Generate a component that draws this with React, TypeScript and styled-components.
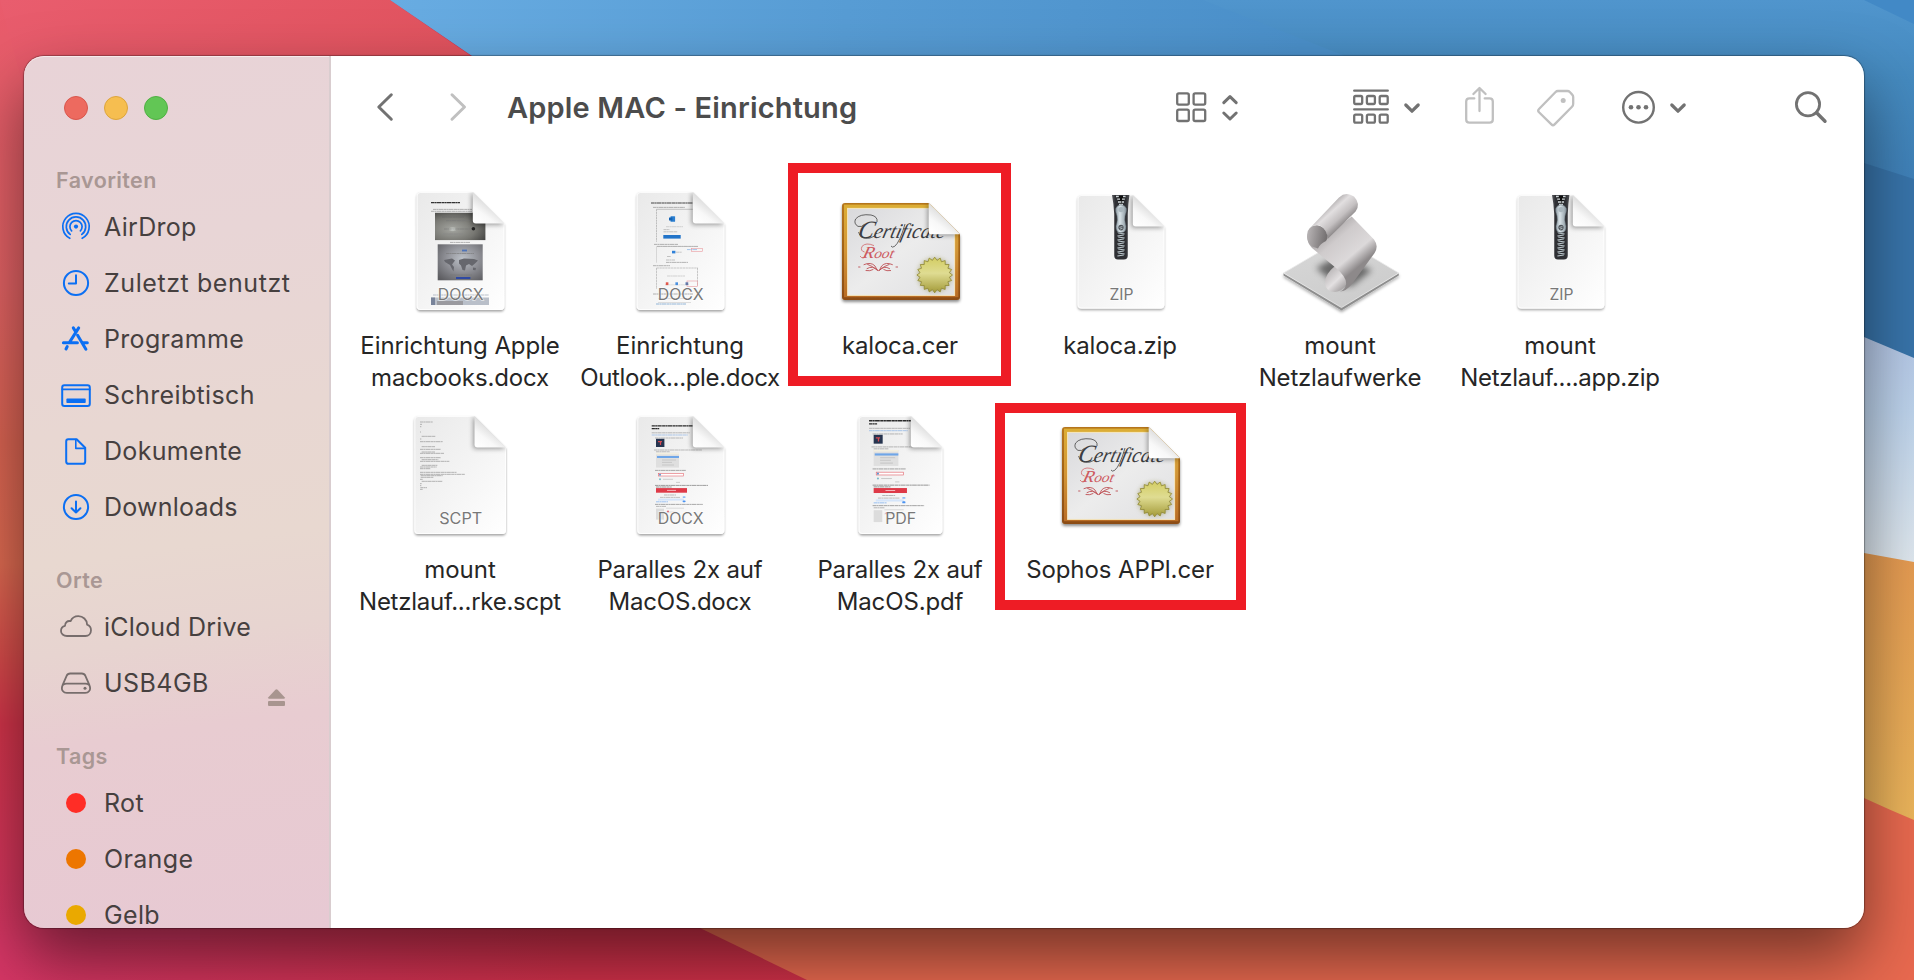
import React from 'react';
import styled, { createGlobalStyle } from 'styled-components';

const GlobalStyle = createGlobalStyle`
  * { box-sizing: border-box; }
  html, body { margin: 0; padding: 0; }
  body {
    width: 1914px;
    height: 980px;
    overflow: hidden;
    font-family: Inter, 'Liberation Sans', sans-serif;
    -webkit-font-smoothing: antialiased;
  }
`;

const Desktop = styled.div`
  position: relative;
  width: 1914px;
  height: 980px;
  padding: 56px 50px 52px 24px;
  overflow: hidden;
  background: #c22c3e;
`;

const WallpaperSvg = styled.svg`
  position: absolute;
  inset: 0;
  display: block;
`;

const WindowFrame = styled.div`
  position: relative;
  display: flex;
  width: 1840px;
  height: 872px;
  border-radius: 20px;
  box-shadow: 0 0 1px 1px rgba(0, 0, 0, 0.3), 0 30px 64px rgba(0, 0, 0, 0.5);
`;

const Sidebar = styled.aside`
  width: 307px;
  height: 100%;
  overflow: hidden;
  border-radius: 20px 0 0 20px;
  border-right: 2px solid #d9cdcf;
  box-shadow: inset 0 1px 0 rgba(255, 255, 255, 0.55);
  background: linear-gradient(
    172deg,
    #e8c8d4 0%,
    #e8ccd1 20%,
    #e7d4d0 33%,
    #e8d8d0 44%,
    #e8d7d2 58%,
    #e8d5d6 78%,
    #e8d3d7 100%
  );
  background: linear-gradient(
    172deg,
    #e8d3d7 0%,
    #e8d5d6 22%,
    #e8d7d2 42%,
    #e8d8d0 56%,
    #e7d4d0 66%,
    #e8ccd1 76%,
    #e7c9d3 100%
  );
`;

const TrafficLights = styled.div`
  display: flex;
  gap: 16px;
  height: 105px;
  padding: 40px 0 0 40px;
`;

const Light = styled.span<{ $fill: string; $edge: string }>`
  width: 24px;
  height: 24px;
  border-radius: 50%;
  background: ${(p) => p.$fill};
  border: 1px solid ${(p) => p.$edge};
`;

const Section = styled.section`
  margin-bottom: 26px;
`;

const SectionTitle = styled.h2`
  display: flex;
  align-items: center;
  height: 38px;
  margin: 0;
  padding-left: 32px;
  font-size: 21.5px;
  font-weight: 600;
  letter-spacing: 0.4px;
  color: #a99794;
`;

const SidebarRow = styled.div`
  display: flex;
  align-items: center;
  gap: 12px;
  height: 56px;
  padding: 0 44px 0 36px;
  font-size: 25px;
  color: #46403f;
  white-space: nowrap;
`;

const RowLabel = styled.span<{ $spacing?: number }>`
  letter-spacing: ${(p) => p.$spacing ?? 0}px;
`;

const IconSvg = styled.svg`
  display: block;
  flex: none;
  overflow: visible;
`;

const TagDot = styled.span<{ $color: string }>`
  width: 20px;
  height: 20px;
  margin: 0 6px;
  border-radius: 50%;
  background: ${(p) => p.$color};
`;

const EjectButton = styled.span`
  align-self: flex-end;
  margin: 0 0 5px auto;
`;

const Content = styled.main`
  flex: 1;
  display: flex;
  flex-direction: column;
  border-radius: 0 20px 20px 0;
  background: #fff;
`;

const Toolbar = styled.header`
  display: flex;
  align-items: center;
  height: 104px;
  padding-left: 44px;
`;

const ToolButton = styled.span<{ $gap: number }>`
  display: block;
  margin-right: ${(p) => p.$gap}px;
`;

const Title = styled.h1`
  width: 669px;
  margin: 0 0 0 39px;
  font-size: 29px;
  font-weight: 600;
  line-height: 40px;
  letter-spacing: 0.17px;
  color: #4c4c4c;
  white-space: nowrap;
`;

const FileGrid = styled.div`
  display: grid;
  grid-template-columns: repeat(6, 220px);
  grid-auto-rows: 224px;
  padding: 26px 0 0 19px;
`;

const FileCell = styled.div`
  position: relative;
  display: flex;
  flex-direction: column;
  align-items: center;
`;

const FileName = styled.div`
  margin-top: 16px;
  font-size: 24px;
  line-height: 32px;
  text-align: center;
  color: #262626;
  white-space: nowrap;
`;

const NameLine = styled.div<{ $spacing: number }>`
  letter-spacing: ${(p) => p.$spacing}px;
`;

const Highlight = styled.div<{ $x: number; $y: number; $w: number; $h: number }>`
  position: absolute;
  left: ${(p) => p.$x}px;
  top: ${(p) => p.$y}px;
  width: ${(p) => p.$w}px;
  height: ${(p) => p.$h}px;
  border: 10px solid #ee1c25;
`;

function Wallpaper() {
  return (
    <WallpaperSvg width="1914" height="980" viewBox="0 0 1914 980">
      <defs>
        <linearGradient id="wpLeft" x1="0" y1="0" x2="0" y2="1">
          <stop offset="0" stopColor="#e95b6c" />
          <stop offset="0.3" stopColor="#e26264" />
          <stop offset="0.47" stopColor="#da6452" />
          <stop offset="0.6" stopColor="#de6a51" />
          <stop offset="0.7" stopColor="#d64b4a" />
          <stop offset="0.77" stopColor="#d2344a" />
          <stop offset="1" stopColor="#d53663" />
        </linearGradient>
        <linearGradient id="wpBottom" x1="0" y1="0" x2="1" y2="0">
          <stop offset="0" stopColor="#d53665" />
          <stop offset="0.3" stopColor="#cf3049" />
          <stop offset="1" stopColor="#cc3040" />
        </linearGradient>
        <linearGradient id="wpRed" x1="0" y1="0" x2="1" y2="0.3">
          <stop offset="0" stopColor="#e95d6e" />
          <stop offset="1" stopColor="#e0525d" />
        </linearGradient>
        <linearGradient id="wpSky" gradientUnits="userSpaceOnUse" x1="390" y1="0" x2="1300" y2="60">
          <stop offset="0" stopColor="#68ace2" />
          <stop offset="0.5" stopColor="#579cd4" />
          <stop offset="1" stopColor="#4b90ca" />
        </linearGradient>
        <linearGradient id="wpBlue" x1="0" y1="0" x2="0" y2="1">
          <stop offset="0" stopColor="#5095cd" />
          <stop offset="0.4" stopColor="#458abf" />
          <stop offset="1" stopColor="#3f80b8" />
        </linearGradient>
        <linearGradient id="wpLav" x1="0" y1="0" x2="0" y2="1">
          <stop offset="0" stopColor="#aebde2" />
          <stop offset="0.45" stopColor="#bdd3ec" />
          <stop offset="1" stopColor="#e4ebf0" />
        </linearGradient>
        <linearGradient id="wpGold" x1="0" y1="0" x2="0" y2="1">
          <stop offset="0" stopColor="#e59a52" />
          <stop offset="1" stopColor="#ecb75c" />
        </linearGradient>
      </defs>
      <rect width="1914" height="980" fill="url(#wpBottom)" />
      <rect width="200" height="940" fill="url(#wpLeft)" />
      <path d="M0 0H390L520 90H24Z" fill="url(#wpRed)" />
      <path d="M390 0H1914V200H600Q520 90 472 56Z" fill="url(#wpSky)" />
      <path d="M1203 0H1914V200H1600L1345 56Z" fill="url(#wpBlue)" />
      <path d="M1864 0H1914V24Z" fill="#4289c6" />
      <path d="M1700 130L1864 163L1914 179V380H1700Z" fill="#3874aa" />
      <path d="M1700 270L1864 337L1914 358V580H1700Z" fill="url(#wpLav)" />
      <path d="M1700 545L1864 553L1914 562V840H1700Z" fill="url(#wpGold)" />
      <path d="M640 900H1700V740L1864 798Q1890 810 1914 820V980H807L700 928Z" fill="#e8694f" />
    </WallpaperSvg>
  );
}

const BLUE = '#0b6ff3';
const DIM = '#776d6c';

function SidebarIcon({ name }: { name: string }) {
  const stroke = {
    fill: 'none',
    stroke: BLUE,
    strokeWidth: 2,
    strokeLinecap: 'round' as const,
    strokeLinejoin: 'round' as const,
  };
  return (
    <IconSvg width="32" height="32" viewBox="0 0 32 32">
      {name === 'airdrop' && (
        <g {...stroke} strokeWidth={1.7} transform="translate(0,-.4)">
          <path d="M9.8 27.7A13.2 13.2 0 1 1 22.2 27.7" />
          <path d="M10.2 23.8A9.7 9.7 0 1 1 21.8 23.8" />
          <path d="M11.6 20.3A6.1 6.1 0 1 1 20.4 20.3" />
          <circle cx="16" cy="16" r="2.1" fill={BLUE} stroke="none" />
        </g>
      )}
      {name === 'recent' && (
        <g {...stroke}>
          <circle cx="16" cy="16" r="12.1" />
          <path d="M16 8.2V16.4H8.8" />
        </g>
      )}
      {name === 'apps' && (
        <g {...stroke} strokeWidth={3}>
          <path d="M18.7 4.9L9.3 19.6M3.4 19.8H17.4M7.2 23.6L6 26M13.3 4.9L16 9.3M17.6 12.2L25.9 26.2M23 19.8H27.3" />
        </g>
      )}
      {name === 'desktop' && (
        <g {...stroke}>
          <rect x="2.2" y="6.2" width="27.6" height="20.8" rx="2.2" />
          <path d="M2.2 10.4H29.8" strokeWidth={1.6} />
          <rect x="6.4" y="19.6" width="19.3" height="4.4" rx="0.8" fill={BLUE} stroke="none" />
        </g>
      )}
      {name === 'doc' && (
        <g {...stroke}>
          <path d="M8.2 4.2H16.6L25.2 12.8V26.4Q25.2 28.8 22.8 28.8H8.6Q6.2 28.8 6.2 26.4V6.4Q6.2 4.2 8.2 4.2Z" />
          <path d="M15.8 4.6V13.4H25" strokeWidth={1.6} />
        </g>
      )}
      {name === 'download' && (
        <g {...stroke}>
          <circle cx="16" cy="16" r="12.1" />
          <path d="M16 10.5V21.4M11.6 17.2L16 21.5L20.4 17.2" />
        </g>
      )}
      {name === 'cloud' && (
        <g {...stroke} stroke={DIM} strokeWidth={1.8}>
          <path d="M7 25C3.4 25 1 22.8 1 19.9C1 17.3 2.7 15.4 5 14.9C4.8 11.6 7.6 9.3 10.6 10.2C12 7 15 5.2 18.3 5.2C23 5.2 26.9 8.6 27.1 13.6C29.6 14.5 31 16.6 31 19.2C31 22.5 28.6 25 25.4 25Z" />
        </g>
      )}
      {name === 'drive' && (
        <g {...stroke} stroke={DIM} strokeWidth={1.8}>
          <path d="M10.2 6.5H21.8Q24.4 6.5 25.4 8.8L29.3 17.8Q31 22 29.2 24Q27.8 25.9 25.2 25.9H6.8Q4.2 25.9 2.8 24Q1 22 2.7 17.8L6.6 8.8Q7.6 6.5 10.2 6.5Z" />
          <path d="M3.4 17.6Q4.6 16.6 6.6 16.6H25.4Q27.4 16.6 28.6 17.6" />
          <circle cx="25" cy="21.3" r="1.5" fill={DIM} stroke="none" />
        </g>
      )}
    </IconSvg>
  );
}

const GREY = '#727272';
const PALE = '#c0c0c0';

function ToolIcon({ name, width }: { name: string; width: number }) {
  const s = {
    fill: 'none',
    stroke: GREY,
    strokeWidth: 2.6,
    strokeLinecap: 'round' as const,
    strokeLinejoin: 'round' as const,
  };
  return (
    <IconSvg width={width} height="44" viewBox={`0 0 ${width} 44`}>
      {name === 'back' && <path {...s} d="M16.3 8.8L3.8 21L16.3 33.2" strokeWidth={3} />}
      {name === 'forward' && <path {...s} stroke={PALE} d="M2 8.8L14.5 21L2 33.2" strokeWidth={3} />}
      {name === 'grid' && (
        <g {...s} strokeWidth={2.3}>
          {[1.2, 17.6].map((x) =>
            [7.3, 23.6].map((y) => <rect key={`${x}-${y}`} x={x} y={y} width="11.6" height="11.4" rx="1.6" />),
          )}
        </g>
      )}
      {name === 'updown' && <path {...s} strokeWidth={3} d="M1.8 16.6L8 10.6L14.2 16.6M1.8 27L8 33L14.2 27" />}
      {name === 'group' && (
        <g {...s} strokeWidth={2.3}>
          <path d="M1.2 4.7H34.8M1.2 23.4H34.8" />
          {[1.2, 13.9, 26.7].map((x) =>
            [10, 28.6].map((y) => <rect key={`${x}-${y}`} x={x} y={y} width="8" height="8" rx="1.4" />),
          )}
        </g>
      )}
      {name === 'chevron' && <path {...s} strokeWidth={3.2} d="M1.8 19L8 25.2L14.2 19" />}
      {name === 'share' && (
        <g {...s} stroke={PALE} strokeWidth={2.3}>
          <path d="M9.3 12.4H4.4Q1.2 12.4 1.2 15.6V33.4Q1.2 36.6 4.4 36.6H24.6Q27.8 36.6 27.8 33.4V15.6Q27.8 12.4 24.6 12.4H19.7" />
          <path d="M14.5 25V2.2M8.4 8L14.5 2L20.6 8" />
        </g>
      )}
      {name === 'tag' && (
        <g {...s} stroke={PALE} strokeWidth={2.3}>
          <path d="M20.8 5H30.4Q31.8 5 32.8 6L35.2 8.6Q36.2 9.6 36.2 11V17.8Q36.2 19.6 35 20.8L17.6 38.4Q16 40 14.4 38.4L2 26.2Q.4 24.6 2 23L18.6 6Q19.6 5 20.8 5Z" />
          <circle cx="26.2" cy="14.6" r="2.5" fill={PALE} stroke="none" />
        </g>
      )}
      {name === 'more' && (
        <g {...s} strokeWidth={2.4}>
          <circle cx="16.5" cy="21.3" r="15.3" />
          {[9, 16.5, 24].map((x) => (
            <circle key={x} cx={x} cy="21.3" r="2.3" fill={GREY} stroke="none" />
          ))}
        </g>
      )}
      {name === 'search' && (
        <g {...s} strokeWidth={2.8}>
          <circle cx="13" cy="18.2" r="11.6" />
          <path d="M21.6 26.8L30 35.2" strokeWidth={3.4} />
        </g>
      )}
    </IconSvg>
  );
}

type Line = [x: number, y: number, w: number, color?: string];

function MicroLines({ lines, h = 0.8 }: { lines: Line[]; h?: number }) {
  return (
    <g>
      {lines.map(([x, y, w, color], i) => (
        <path
          key={i}
          d={`M${x} ${y}H${x + w}`}
          stroke={color ?? '#a0a0a0'}
          strokeWidth={h}
          strokeDasharray="3.2 .3 1.8 .3 4.4 .4"
        />
      ))}
    </g>
  );
}

/** White sheet with a turned top-right corner, shared by all document icons. */
function Sheet({
  id,
  left,
  right,
  top = 6,
  bottom = 124,
  children,
  ext,
  extWidth,
  extX = 64.7,
}: {
  id: string;
  left: number;
  right: number;
  top?: number;
  bottom?: number;
  children?: React.ReactNode;
  ext: string;
  extWidth: number;
  extX?: number;
}) {
  const f = 31.5;
  const outline = `M${left + 4} ${top}H${right - f}L${right} ${top + f}V${bottom - 4}Q${right} ${bottom} ${right - 4} ${bottom}H${left + 4}Q${left} ${bottom} ${left} ${bottom - 4}V${top + 4}Q${left} ${top} ${left + 4} ${top}Z`;
  return (
    <IconSvg width="128" height="128" viewBox="0 0 128 128">
      <defs>
        <linearGradient id={`${id}p`} x1="0" y1="0" x2="1" y2="1">
          <stop offset="0" stopColor="#e9e9e9" />
          <stop offset="0.55" stopColor="#f5f5f5" />
          <stop offset="1" stopColor="#ffffff" />
        </linearGradient>
        <linearGradient id={`${id}f`} x1="0.1" y1="1" x2="0.55" y2="0.4">
          <stop offset="0" stopColor="#ffffff" />
          <stop offset="0.5" stopColor="#f8f8f8" />
          <stop offset="1" stopColor="#dcdcdc" />
        </linearGradient>
        <filter id={`${id}s`} x="-20%" y="-20%" width="140%" height="140%">
          <feDropShadow dx="0" dy="1.6" stdDeviation="0.9" floodOpacity="0.36" />
        </filter>
        <filter id={`${id}b`} x="-40%" y="-40%" width="180%" height="180%">
          <feGaussianBlur stdDeviation="2.6" />
        </filter>
        <clipPath id={`${id}c`}>
          <path d={outline} />
        </clipPath>
      </defs>
      <path d={outline} fill={`url(#${id}p)`} filter={`url(#${id}s)`} />
      <g clipPath={`url(#${id}c)`}>
        <path d={outline} fill="none" stroke="#fff" strokeWidth="2" opacity="0.8" />
        {children}
        <path
          d={`M${right - f - 1} ${top}V${top + f + 1}H${right}Z`}
          fill="#000"
          opacity="0.42"
          filter={`url(#${id}b)`}
        />
      </g>
      <path
        d={`M${right - f} ${top}V${top + f - 3}Q${right - f} ${top + f} ${right - f + 3} ${top + f}H${right}Z`}
        fill={`url(#${id}f)`}
      />
      <text
        x={extX}
        y="113.7"
        textAnchor="middle"
        textLength={extWidth}
        lengthAdjust="spacingAndGlyphs"
        fontFamily="Inter, sans-serif"
        fontSize="15.8"
        fill="#787878"
        stroke="#fff"
        strokeWidth="1.4"
        strokeOpacity="0.65"
        paintOrder="stroke"
      >
        {ext}
      </text>
    </IconSvg>
  );
}

function DocxPhotos() {
  return (
    <Sheet id="d1" left={20.7} right={108.3} ext="DOCX" extWidth={46}>
      <defs>
        <radialGradient id="ph1" cx="0.35" cy="0.6" r="0.75">
          <stop offset="0" stopColor="#e0e6e0" />
          <stop offset="0.12" stopColor="#9c9d98" />
          <stop offset="0.6" stopColor="#777772" />
          <stop offset="1" stopColor="#444442" />
        </radialGradient>
        <radialGradient id="ph2" cx="0.55" cy="0.4" r="0.75">
          <stop offset="0" stopColor="#bcc1c8" />
          <stop offset="0.5" stopColor="#8e8f95" />
          <stop offset="1" stopColor="#5c5c60" />
        </radialGradient>
      </defs>
      <MicroLines lines={[[35, 16.7, 29, '#333']]} h={1.2} />
      <MicroLines lines={[[37, 23.4, 39], [35, 25.3, 41], [54, 56.4, 20]]} />
      <rect x="39" y="26.8" width="50.4" height="27.3" fill="url(#ph1)" />
      <MicroLines
        lines={[[46, 31, 22, '#666'], [50, 34.6, 24, '#777'], [48, 43, 26, '#777'], [47, 48, 20, '#888']]}
        h={0.6}
      />
      <circle cx="77.4" cy="42.8" r="1.8" fill="#222" />
      <rect x="41.7" y="58.3" width="45" height="36" fill="url(#ph2)" />
      <rect x="66" y="63.6" width="5" height="1.8" fill="#4f74b8" />
      <MicroLines lines={[[50, 67.5, 28, '#777'], [54, 89, 22, '#777']]} h={0.6} />
      <path
        d="M48 74L56 72.5L59 74.5L56 78.5L58 81L57.5 85.5L56 83L54 79L49 76ZM63 74L68 72.5L78 73L82 74.5L79 77.5L76 80L73 78L70 79.5L69 84.5L66.5 84L65 79.5L63 77.5ZM77 81.5L80 82L79.5 84.2L77 84Z"
        fill="#66676d"
      />
      <rect x="60" y="91" width="14.4" height="2" fill="#2f49a3" />
      <MicroLines lines={[[37, 109, 56, '#aab2c0']]} />
      <rect x="35" y="111.5" width="58" height="7.5" fill="#b9bfc9" />
      <rect x="35" y="111.5" width="4" height="7.5" fill="#78839a" />
      <rect x="41" y="115" width="26" height="4" fill="#9a9a9f" />
    </Sheet>
  );
}

function DocxOutlook() {
  return (
    <Sheet id="d2" left={20.7} right={108.3} ext="DOCX" extWidth={46}>
      <MicroLines lines={[[35, 17, 42, '#444']]} h={1.1} />
      <MicroLines lines={[[37, 21.4, 32], [38, 58.4, 24], [37, 79.7, 17], [37, 108, 40], [40, 118, 30, '#7aa4cf']]} />
      <path d="M40.5 23.3V55.7" stroke="#a8a8a8" strokeWidth="0.7" strokeDasharray="2 .6" />
      <path d="M40.5 23.3H77" stroke="#b5b5b5" strokeWidth="0.8" />
      <rect x="54.5" y="30.2" width="4.6" height="5.6" rx="0.6" fill="#2b7fd0" />
      <rect x="53" y="31.4" width="3.4" height="3.2" rx="0.4" fill="#1563b4" />
      <MicroLines lines={[[50, 40.7, 17, '#bbb'], [47.5, 43.6, 6], [47.5, 45.8, 14]]} h={0.6} />
      <rect x="47.3" y="49" width="17.4" height="3.6" fill="#2274c9" />
      <path d="M40.5 60.5V76.7M40.5 60.5H82" fill="none" stroke="#c4c4c4" strokeWidth="0.6" />
      <MicroLines
        lines={[[41, 60.4, 41, '#999'], [71, 63.6, 10, '#6aa4e4'], [60, 66.2, 6, '#aaa'], [51, 70.5, 4], [50, 74, 9], [50, 76.4, 22, '#888']]}
        h={0.6}
      />
      <rect x="75.6" y="62.4" width="11" height="3" fill="none" stroke="#e99aa0" strokeWidth="0.6" />
      <rect x="56" y="64.8" width="3.4" height="2.6" fill="#2f80d8" />
      <path
        d="M40.5 82V103M40.5 82H82M81.5 82V100"
        stroke="#a8a8a8"
        strokeWidth="0.6"
        strokeDasharray="2.4 .5"
        fill="none"
      />
      <MicroLines lines={[[51, 90, 18, '#bbb'], [49, 98.8, 24, '#ccc']]} h={0.6} />
      <rect x="49.8" y="96.3" width="2.6" height="2.8" fill="#e0584a" />
      <rect x="59.4" y="96.3" width="2.6" height="2.8" fill="#4a90e0" />
      <rect x="69.6" y="96.3" width="2.6" height="2.8" fill="#2f67a8" />
      <rect x="71" y="95" width="10.6" height="5.6" fill="none" stroke="#e89aa0" strokeWidth="0.6" />
      <path d="M42 112.5H75M42 116.5H75" stroke="#d5d5d5" strokeWidth="0.8" />
    </Sheet>
  );
}

function GuidePage() {
  return (
    <g>
      <MicroLines lines={[[35.7, 15.8, 41, '#2a2a2a'], [35.7, 18.6, 7.5, '#2a2a2a']]} h={1.2} />
      <MicroLines
        lines={[[35.7, 22.8, 38], [35.7, 25, 36, '#8fb6e6'], [39, 28, 28], [38, 40, 48], [40, 41.8, 14], [39, 60.4, 31, '#888'], [39, 75.4, 53, '#777'], [40, 77, 16, '#777'], [39, 94.4, 48, '#888'], [40, 96.4, 10]]}
        h={0.7}
      />
      <rect x="40" y="28.8" width="8.4" height="8.2" fill="#26344f" />
      <path d="M42 31.6H46M44.5 31.6V35" stroke="#d34a52" strokeWidth="1.2" />
      <rect x="40" y="42.8" width="23" height="14.8" fill="#dfdfdf" />
      <rect x="40" y="42.8" width="23" height="1.6" fill="#f3efe0" />
      <rect x="41" y="46" width="22" height="2" fill="#6fa6e8" />
      <path d="M46 50H60M46 52.4H56M46 55H58" stroke="#bdbdbd" strokeWidth="0.7" />
      <rect x="42.4" y="63.4" width="25.2" height="2.6" fill="#fff" stroke="#e3666e" strokeWidth="0.6" />
      <circle cx="44" cy="64.8" r="1" fill="#5f95cf" />
      <circle cx="44" cy="69.3" r="1" fill="#7dbcc9" />
      <path d="M47 69.3H57M60 72.4H64" stroke="#c3c3c3" strokeWidth="0.8" />
      <rect x="40" y="78.1" width="31" height="4.6" fill="#de3a48" />
      <path d="M51 80.4H60" stroke="#f4b5ba" strokeWidth="1" />
      <MicroLines lines={[[48, 85, 12], [44, 87.4, 20, '#aaa'], [40, 91.8, 12, '#79aef0']]} h={0.7} />
      <rect x="42" y="88.6" width="26" height="2" fill="#d5e5fa" />
      <rect x="66.6" y="86.3" width="3" height="1.8" rx="0.8" fill="#8fbdf6" />
      <rect x="66.6" y="90.4" width="3" height="1.8" rx="0.8" fill="#4a93f2" />
      <rect x="40" y="98.6" width="8" height="11" fill="#dcdcdc" />
      <path d="M50 98.2H68M50 102H60" stroke="#d4d4d4" strokeWidth="0.8" />
      <circle cx="52" cy="101.4" r="0.9" fill="#e0525d" />
    </g>
  );
}

function ScriptDoc() {
  const rows: [number, number, number][] = [
    [240, 96, 38], [240, 103, 6], [240, 110, 4], [240, 126, 3], [245, 139, 41], [240, 147, 4], [240, 155, 68],
    [245, 170, 40], [240, 178, 63], [245, 186, 40], [240, 190, 72], [240, 203, 63], [245, 209, 50], [240, 214, 88],
    [245, 226, 47], [240, 231, 50], [240, 236, 32], [240, 247, 110], [240, 253, 135], [242, 257, 66],
    [242, 262, 38], [240, 268, 8], [245, 274, 63], [240, 281, 5], [240, 287, 4], [241, 293, 20], [240, 298, 8],
  ];
  return (
    <Sheet id="sc" left={18.4} right={110} ext="SCPT" extWidth={43}>
      <MicroLines lines={rows.map(([x, y, w]) => [x / 3 - 56, y / 3 - 20, w / 3, '#989898'])} h={0.7} />
    </Sheet>
  );
}

function ZipDoc({ id }: { id: string }) {
  const teeth = Array.from({ length: 13 }, (_, i) => 45 + i * 2);
  return (
    <Sheet id={id} left={21.6} right={108.3} top={9} bottom={122.6} ext="ZIP" extWidth={24} extX={65.5}>
      <defs>
        <linearGradient id={`${id}z`} x1="0" y1="0" x2="1" y2="0">
          <stop offset="0" stopColor="#5b5c60" />
          <stop offset="0.2" stopColor="#2f3034" />
          <stop offset="0.8" stopColor="#2f3034" />
          <stop offset="1" stopColor="#55565a" />
        </linearGradient>
        <linearGradient id={`${id}m`} x1="0" y1="0" x2="1" y2="0">
          <stop offset="0" stopColor="#8d9aa2" />
          <stop offset="0.4" stopColor="#d9e3e8" />
          <stop offset="1" stopColor="#87949c" />
        </linearGradient>
      </defs>
      <path d="M56 9H73.4Q72.2 17 71.8 28V69.5Q71.8 73.4 67.8 73.4H62Q58.2 73.4 58.2 69.5V28Q57.6 17 56 9Z" fill={`url(#${id}z)`} />
      <path d="M60.5 10L65 22L69.5 10Z" fill="#111" />
      <path d="M60 10.5H62.8M61.2 13.2H64M62 16H65M69.6 10.5H67M68.8 13.2H66M68 16H65.6M63 18.5H67" stroke="#d3dadd" strokeWidth="1.3" />
      {teeth.map((y, i) => (
        <path key={y} d={i % 2 ? `M62.2 ${y}L68.6 ${y + 1}` : `M61.4 ${y + 1}L67.8 ${y}`} stroke="#b9c5ca" strokeWidth="1.1" />
      ))}
      <path
        d="M61.5 20Q65 17.5 68.6 20Q71.4 22 70.2 26Q68.6 30 68.8 34Q69.2 37 70 40Q70.6 46.6 65 46.8Q59.6 46.6 60 40Q61 37 61.3 34Q61.5 30 59.8 26Q58.8 22 61.5 20Z"
        fill={`url(#${id}m)`}
        stroke="#5c676e"
        strokeWidth="0.5"
      />
      <ellipse cx="65" cy="41.6" rx="2.6" ry="2.8" fill="#4a5056" />
      <path d="M63.4 41.4L66.4 40.6M63.8 43.2L66.6 42.2" stroke="#c9d2d6" strokeWidth="0.8" />
      <circle cx="65" cy="23.6" r="2.6" fill="#a9b6bd" />
    </Sheet>
  );
}

function CertificateIcon({ id }: { id: string }) {
  const seal = Array.from({ length: 40 }, (_, i) => {
    const r = i % 2 ? 14.8 : 17.8;
    const a = (i * Math.PI) / 20 - Math.PI / 2;
    return `${(98.7 + r * Math.cos(a)).toFixed(2)},${(89 + r * Math.sin(a)).toFixed(2)}`;
  }).join(' ');
  return (
    <IconSvg width="128" height="128" viewBox="0 0 128 128">
      <defs>
        <linearGradient id={`${id}w`} x1="0" y1="0" x2="0" y2="1">
          <stop offset="0" stopColor="#dcae35" />
          <stop offset="0.5" stopColor="#d29536" />
          <stop offset="1" stopColor="#b96d25" />
        </linearGradient>
        <linearGradient id={`${id}e`} x1="0" y1="0" x2="0" y2="1">
          <stop offset="0" stopColor="#b5761c" />
          <stop offset="1" stopColor="#8c4d13" />
        </linearGradient>
        <linearGradient id={`${id}p`} x1="0" y1="0" x2="1" y2="1">
          <stop offset="0" stopColor="#d9d9dc" />
          <stop offset="0.5" stopColor="#ececec" />
          <stop offset="1" stopColor="#e0e0e2" />
        </linearGradient>
        <linearGradient id={`${id}g`} x1="0" y1="0" x2="0" y2="1">
          <stop offset="0" stopColor="#d3cd62" />
          <stop offset="0.45" stopColor="#dfdc92" />
          <stop offset="1" stopColor="#a39a38" />
        </linearGradient>
        <linearGradient id={`${id}f`} x1="0.1" y1="1" x2="0.55" y2="0.4">
          <stop offset="0" stopColor="#fff" />
          <stop offset="0.5" stopColor="#f8f8f8" />
          <stop offset="1" stopColor="#dedede" />
        </linearGradient>
        <filter id={`${id}s`} x="-20%" y="-20%" width="140%" height="140%">
          <feDropShadow dx="0" dy="2" stdDeviation="1.6" floodOpacity="0.45" />
        </filter>
        <filter id={`${id}b`} x="-40%" y="-40%" width="180%" height="180%">
          <feGaussianBlur stdDeviation="2.4" />
        </filter>
        <clipPath id={`${id}c`}>
          <path d="M6 17H92.7L124 48.3V114H6Z" />
        </clipPath>
      </defs>
      <g filter={`url(#${id}s)`}>
        <path d="M9 17H92.7L124 48.3V111Q124 114 121 114H9Q6 114 6 111V20Q6 17 9 17Z" fill={`url(#${id}e)`} />
      </g>
      <g clipPath={`url(#${id}c)`}>
        <rect x="8" y="18.6" width="114.4" height="92.6" fill={`url(#${id}w)`} />
        <rect x="11.6" y="22.4" width="107" height="87" fill={`url(#${id}p)`} stroke="#f5e7c0" strokeWidth="1" />
        <g transform="translate(21 52.4) skewX(-14)">
          <text fontFamily="'Liberation Serif', serif" fontStyle="italic" fontSize="21" textLength="87" lengthAdjust="spacingAndGlyphs" fill="#3c3d41">
            <tspan fontSize="25">C</tspan>ertificate
          </text>
        </g>
        <path
          d="M41 36Q42 30.5 35 29Q24 27.6 19.6 33Q17.4 37.6 22 40.4Q26 41.4 28.4 38.4M22.6 46Q24 53.6 33.6 52.2Q39 51 40.6 47M69 38Q64 56 58.6 60.4Q56 62 55 60"
          fill="none"
          stroke="#444"
          strokeWidth="0.8"
        />
        <g transform="translate(26 72.4) skewX(-14)">
          <text fontFamily="'Liberation Serif', serif" fontStyle="italic" fontSize="14" textLength="31" lengthAdjust="spacingAndGlyphs" fill="#cd5a5f">
            <tspan fontSize="17">R</tspan>oot
          </text>
        </g>
        <path d="M38 59.6Q30 56 26 60.4Q24 65 28.6 66M24 70Q27 74 30 70" fill="none" stroke="#d0666a" strokeWidth="0.8" />
        <path
          d="M22.6 81H24M60 81H61.6M28 78.6Q35 75.6 39 80Q41 84.6 42.4 84.6Q43.8 84.6 45.6 80Q49.6 75.6 56.4 78.6M31 82.6Q37 79 41.6 84.4M53.6 82.6Q47.6 79 43.4 84.4M30 84.6Q34 85.4 37 83.6M54.6 84.6Q50.6 85.4 47.8 83.6M31.6 78.4Q36.6 80 41 84M53.2 78.4Q48 80 43.8 84"
          fill="none"
          stroke="#bd5055"
          strokeWidth="0.9"
          strokeLinecap="round"
        />
        <polygon points={seal} fill="#77721f" opacity="0.55" filter={`url(#${id}b)`} />
        <polygon points={seal} fill={`url(#${id}g)`} stroke="#8f8833" strokeWidth="0.8" />
        <path d="M91.7 17V49.3H124Z" fill="#000" opacity="0.4" filter={`url(#${id}b)`} />
      </g>
      <path d="M92.7 17V46Q92.7 48.3 95 48.3H124Z" fill={`url(#${id}f)`} />
    </IconSvg>
  );
}

function ScriptAppIcon() {
  return (
    <IconSvg width="128" height="128" viewBox="0 0 128 128">
      <defs>
        <linearGradient id="saBase" x1="0" y1="0" x2="0.6" y2="1">
          <stop offset="0" stopColor="#d8d8d8" />
          <stop offset="1" stopColor="#cccccc" />
        </linearGradient>
        <linearGradient id="saRoll" gradientUnits="userSpaceOnUse" x1="46" y1="22" x2="64" y2="42">
          <stop offset="0" stopColor="#a39fa0" />
          <stop offset="0.35" stopColor="#e2dfe0" />
          <stop offset="0.7" stopColor="#c4c0c1" />
          <stop offset="1" stopColor="#8b8788" />
        </linearGradient>
        <linearGradient id="saBody" gradientUnits="userSpaceOnUse" x1="54" y1="36" x2="88" y2="76">
          <stop offset="0" stopColor="#a29e9f" />
          <stop offset="0.35" stopColor="#cfcbcc" />
          <stop offset="0.75" stopColor="#dcd9da" />
          <stop offset="1" stopColor="#8d898a" />
        </linearGradient>
        <linearGradient id="saEnd" x1="0" y1="0" x2="1" y2="0.2">
          <stop offset="0" stopColor="#bdb9ba" />
          <stop offset="1" stopColor="#757172" />
        </linearGradient>
        <linearGradient id="saFoot" x1="0" y1="0" x2="0.8" y2="1">
          <stop offset="0" stopColor="#a8a4a5" />
          <stop offset="0.6" stopColor="#e3e0e1" />
          <stop offset="1" stopColor="#9c9899" />
        </linearGradient>
        <filter id="saBlur" x="-40%" y="-40%" width="180%" height="180%">
          <feGaussianBlur stdDeviation="3.4" />
        </filter>
        <filter id="saDrop" x="-20%" y="-20%" width="140%" height="150%">
          <feDropShadow dx="0" dy="1.6" stdDeviation="1.4" floodOpacity="0.4" />
        </filter>
      </defs>
      <path d="M7.5 87L65.5 121L122.8 87V89.6L65.5 124.6L7.5 89.6Z" fill="#8e8e8e" filter="url(#saDrop)" />
      <path d="M65.5 53L122.8 87L65.5 121.6L7.5 87Z" fill="url(#saBase)" stroke="#eaeaea" strokeWidth="0.8" />
      <path d="M40 82L62 70L96 84L76 100L62 100Z" fill="#000" opacity="0.5" filter="url(#saBlur)" />
      <path d="M59 80Q49 88 48.8 97Q50 106 59 106Q66 105.6 70.6 98L70 88Z" fill="url(#saFoot)" />
      <path d="M31.2 50Q31 57 36 62L60 82Q70.6 91 70.2 98Q70 103 64 105.6Q70 105.4 76 98L98.6 67Q103 60 98 53.4L75.7 30.6L48 52Z" fill="url(#saBody)" />
      <path d="M34 42L63 11.4Q70 5 78 10.6Q85 18 79.6 25.4L51.6 53Q49.4 39 41 39Q37 39 34 42Z" fill="url(#saRoll)" />
      <path d="M31 49Q31.6 39.6 41 39.2Q49 40 51.4 49.4Q51.6 52.6 50 55Q44 57.6 42 62.4L36 60.6Q31 56 31 49Z" fill="url(#saEnd)" />
    </IconSvg>
  );
}

type FileEntry = {
  lines: [string, number][];
  icon: React.ReactNode;
  mark?: [number, number, number, number];
};

const files: FileEntry[] = [
  { lines: [['Einrichtung Apple', -0.1], ['macbooks.docx', -0.14]], icon: <DocxPhotos /> },
  { lines: [['Einrichtung', -0.05], ['Outlook...ple.docx', -0.34]], icon: <DocxOutlook /> },
  { lines: [['kaloca.cer', -0.2]], icon: <CertificateIcon id="c1" />, mark: [-2, -23, 223, 223] },
  { lines: [['kaloca.zip', -0.15]], icon: <ZipDoc id="z1" /> },
  { lines: [['mount', 0], ['Netzlaufwerke', -0.2]], icon: <ScriptAppIcon /> },
  { lines: [['mount', 0], ['Netzlauf....app.zip', -0.32]], icon: <ZipDoc id="z2" /> },
  { lines: [['mount', 0], ['Netzlauf...rke.scpt', -0.26]], icon: <ScriptDoc /> },
  {
    lines: [['Paralles 2x auf', -0.15], ['MacOS.docx', -0.2]],
    icon: (
      <Sheet id="d3" left={21.3} right={108.3} ext="DOCX" extWidth={46}>
        <GuidePage />
      </Sheet>
    ),
  },
  {
    lines: [['Paralles 2x auf', -0.15], ['MacOS.pdf', -0.15]],
    icon: (
      <Sheet id="pd" left={22.6} right={106.3} ext="PDF" extWidth={31}>
        <g transform="translate(-5.3 -6.3) scale(1.074 1.08)">
          <GuidePage />
        </g>
      </Sheet>
    ),
  },
  { lines: [['Sophos APPl.cer', -0.1]], icon: <CertificateIcon id="c2" />, mark: [-15, -7, 251, 207] },
];

const favorites: [string, string, number][] = [
  ['airdrop', 'AirDrop', 0.3],
  ['recent', 'Zuletzt benutzt', 0.58],
  ['apps', 'Programme', 0.33],
  ['desktop', 'Schreibtisch', 0.36],
  ['doc', 'Dokumente', 0.33],
  ['download', 'Downloads', 0.22],
];

const tags: [string, string][] = [
  ['Rot', '#ff2d26'],
  ['Orange', '#ed7600'],
  ['Gelb', '#eaa900'],
];

export default function App() {
  return (
    <>
      <GlobalStyle />
      <Desktop>
        <Wallpaper />
        <WindowFrame>
          <Sidebar>
            <TrafficLights>
              <Light $fill="#ed6a5f" $edge="#d9564c" />
              <Light $fill="#f6be50" $edge="#dda53c" />
              <Light $fill="#62c655" $edge="#4fb043" />
            </TrafficLights>
            <Section>
              <SectionTitle>Favoriten</SectionTitle>
              {favorites.map(([icon, label, spacing]) => (
                <SidebarRow key={label}>
                  <SidebarIcon name={icon} />
                  <RowLabel $spacing={spacing}>{label}</RowLabel>
                </SidebarRow>
              ))}
            </Section>
            <Section>
              <SectionTitle>Orte</SectionTitle>
              <SidebarRow>
                <SidebarIcon name="cloud" />
                <RowLabel $spacing={0.22}>iCloud Drive</RowLabel>
              </SidebarRow>
              <SidebarRow>
                <SidebarIcon name="drive" />
                <RowLabel $spacing={0.45}>USB4GB</RowLabel>
                <EjectButton>
                  <IconSvg width="17" height="17" viewBox="0 0 17 17">
                    <path d="M7.4.7Q8.5-.3 9.6.7L16.6 8.2Q17.3 9.8 15.8 9.8H1.2Q-.3 9.8 .4 8.2Z" fill="#a8958f" />
                    <rect y="12" width="17" height="5" rx="1" fill="#a8958f" />
                  </IconSvg>
                </EjectButton>
              </SidebarRow>
            </Section>
            <Section>
              <SectionTitle>Tags</SectionTitle>
              {tags.map(([label, color]) => (
                <SidebarRow key={label}>
                  <TagDot $color={color} />
                  <RowLabel $spacing={0.35}>{label}</RowLabel>
                </SidebarRow>
              ))}
            </Section>
          </Sidebar>
          <Content>
            <Toolbar>
              <ToolButton $gap={55}><ToolIcon name="back" width={20} /></ToolButton>
              <ToolButton $gap={0}><ToolIcon name="forward" width={18} /></ToolButton>
              <Title>Apple MAC - Einrichtung</Title>
              <ToolButton $gap={16}><ToolIcon name="grid" width={30} /></ToolButton>
              <ToolButton $gap={115}><ToolIcon name="updown" width={16} /></ToolButton>
              <ToolButton $gap={15}><ToolIcon name="group" width={36} /></ToolButton>
              <ToolButton $gap={45}><ToolIcon name="chevron" width={16} /></ToolButton>
              <ToolButton $gap={43}><ToolIcon name="share" width={29} /></ToolButton>
              <ToolButton $gap={47}><ToolIcon name="tag" width={38} /></ToolButton>
              <ToolButton $gap={15}><ToolIcon name="more" width={33} /></ToolButton>
              <ToolButton $gap={109}><ToolIcon name="chevron" width={16} /></ToolButton>
              <ToolButton $gap={0}><ToolIcon name="search" width={32} /></ToolButton>
            </Toolbar>
            <FileGrid>
              {files.map(({ lines, icon, mark }, i) => (
                <FileCell key={i}>
                  {icon}
                  <FileName>
                    {lines.map(([text, spacing]) => (
                      <NameLine key={text} $spacing={spacing}>{text}</NameLine>
                    ))}
                  </FileName>
                  {mark && <Highlight $x={mark[0]} $y={mark[1]} $w={mark[2]} $h={mark[3]} />}
                </FileCell>
              ))}
            </FileGrid>
          </Content>
        </WindowFrame>
      </Desktop>
    </>
  );
}
